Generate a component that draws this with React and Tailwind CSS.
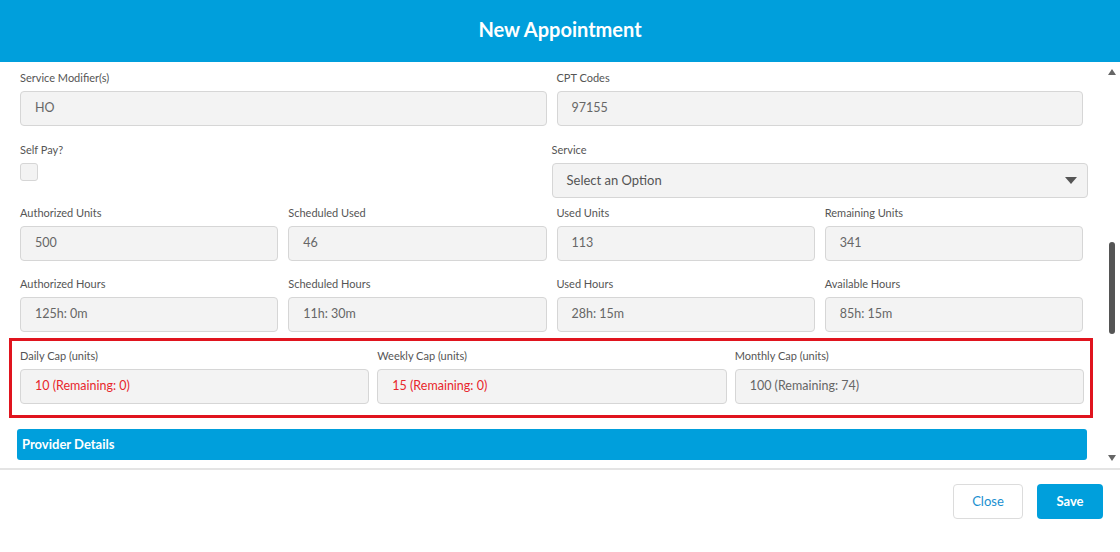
import React from "react";

const font = { fontFamily: "Lato, 'Open Sans', sans-serif" };

function Field({ label, value, red }) {
    return (
        <div className="flex flex-col">
            <label className="h-[14px] text-[11px] leading-[14px] text-[#555]">{label}</label>
            <div
                className={
                    "mt-[6px] flex h-[35px] items-center rounded-[4px] border border-[#d6d6d6] bg-[#f3f3f3] px-[14px] text-[12.5px] " +
                    (red ? "text-[#e8262b]" : "text-[#666]")
                }
            >
                {value}
            </div>
        </div>
    );
}

export default function App() {
    return (
        <div className="flex h-[552px] w-[1120px] flex-col bg-white" style={font}>
            <div className="flex h-[62px] shrink-0 items-center justify-center bg-[#009fdc] pb-[4px]">
                <h1 className="text-[20px] font-bold text-white">New Appointment</h1>
            </div>

            <div className="flex h-[406px] shrink-0">
                <div className="flex-1 pt-[9px]">
                    <div className="grid grid-cols-2 gap-x-[10px] pl-[20px] pr-[22px]">
                        <Field label="Service Modifier(s)" value="HO" />
                        <Field label="CPT Codes" value="97155" />
                    </div>

                    <div className="mt-[17px] grid grid-cols-2 gap-x-[10px] pl-[20px] pr-[22px]">
                        <div className="flex flex-col">
                            <label className="h-[14px] text-[11px] leading-[14px] text-[#555]">Self Pay?</label>
                            <div className="mt-[6px] h-[18px] w-[18px] rounded-[3px] border border-[#d6d6d6] bg-[#f3f3f3]" />
                        </div>
                        <div className="-ml-[5px] -mr-[5px] flex flex-col">
                            <label className="h-[14px] text-[11px] leading-[14px] text-[#555]">Service</label>
                            <div className="mt-[6px] flex h-[35px] items-center justify-between rounded-[4px] border border-[#d6d6d6] bg-[#f3f3f3] pl-[14px] pr-[10px] text-[13px] text-[#555]">
                                <span>Select an Option</span>
                                <svg width="12" height="8" viewBox="0 0 12 8">
                                    <path d="M0 0 H12 L6 7 Z" fill="#555" />
                                </svg>
                            </div>
                        </div>
                    </div>

                    <div className="mt-[8px] grid grid-cols-4 gap-x-[10px] pl-[20px] pr-[22px]">
                        <Field label="Authorized Units" value="500" />
                        <Field label="Scheduled Used" value="46" />
                        <Field label="Used Units" value="113" />
                        <Field label="Remaining Units" value="341" />
                    </div>

                    <div className="mt-[16px] grid grid-cols-4 gap-x-[10px] pl-[20px] pr-[22px]">
                        <Field label="Authorized Hours" value="125h: 0m" />
                        <Field label="Scheduled Hours" value="11h: 30m" />
                        <Field label="Used Hours" value="28h: 15m" />
                        <Field label="Available Hours" value="85h: 15m" />
                    </div>

                    <div className="ml-[9px] mr-[12px] mt-[6px] border-[3px] border-[#e0141e] pb-[11px] pl-[8px] pr-[6px] pt-[8px]">
                        <div className="grid grid-cols-3 gap-x-[8px]">
                            <Field label="Daily Cap (units)" value="10 (Remaining: 0)" red />
                            <Field label="Weekly Cap (units)" value="15 (Remaining: 0)" red />
                            <Field label="Monthly Cap (units)" value="100 (Remaining: 74)" />
                        </div>
                    </div>

                    <div className="ml-[17px] mr-[18px] mt-[11px] flex h-[31px] items-center rounded-[3px] bg-[#009fdc] px-[5px] text-[13px] font-bold text-white">
                        Provider Details
                    </div>
                </div>

                {/* scrollbar */}
                <div className="flex w-[15px] flex-col items-center justify-between py-[7px] pr-[1px]">
                    <svg width="8" height="6" viewBox="0 0 8 6">
                        <path d="M0 6 L4 0 L8 6 Z" fill="#666" />
                    </svg>
                    <div className="flex flex-1 flex-col justify-start pt-[167px]">
                        <div className="h-[92px] w-[6px] rounded-full bg-[#555]" />
                    </div>
                    <svg width="8" height="6" viewBox="0 0 8 6">
                        <path d="M0 0 L8 0 L4 6 Z" fill="#666" />
                    </svg>
                </div>
            </div>

            <div className="flex flex-1 items-start justify-end gap-[14px] border-t-2 border-[#e4e4e4] pr-[17px] pt-[14px]">
                <button className="h-[35px] w-[70px] rounded-[4px] border border-[#dcdcdc] bg-white text-[13px] text-[#1a8fd0]">
                    Close
                </button>
                <button className="h-[35px] w-[66px] rounded-[4px] bg-[#009fdc] text-[13px] font-bold text-white">
                    Save
                </button>
            </div>
        </div>
    );
}
